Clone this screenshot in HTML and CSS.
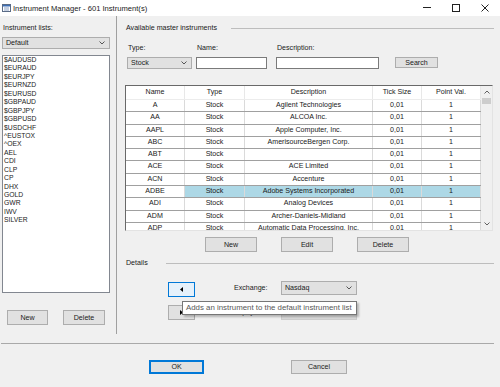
FILE: index.html
```html
<!DOCTYPE html>
<html lang="en">
<head>
    <meta charset="UTF-8">
    <title>Instrument Manager</title>
    <link rel="stylesheet" href="styles.css">
</head>
<body>
    <div class="titlebar">
        <svg class="app-icon" width="9" height="8" viewBox="0 0 9 8">
            <rect x="0.5" y="0.5" width="8" height="7" fill="#fff" stroke="#5a6b86"/>
            <rect x="1" y="1" width="7" height="1.5" fill="#3d6fb6"/>
            <line x1="2" y1="4" x2="7" y2="4" stroke="#8aa0c4"/>
            <line x1="2" y1="6" x2="7" y2="6" stroke="#8aa0c4"/>
        </svg>
        <span class="title">Instrument Manager - 601 Instrument(s)</span>
        <div class="win-controls">
            <span class="win-btn"><svg width="8" height="8"><line x1="0" y1="3.5" x2="8" y2="3.5" stroke="#222"/></svg></span>
            <span class="win-btn"><svg width="8" height="8"><rect x="0.5" y="0.5" width="7" height="7" fill="none" stroke="#222"/></svg></span>
            <span class="win-btn"><svg width="8" height="8"><path d="M0.5 0.5L7.5 7.5M7.5 0.5L0.5 7.5" stroke="#222"/></svg></span>
        </div>
    </div>

    <div class="main">
        <div class="lists-pane">
            <div class="pane-label">Instrument lists:</div>
            <div class="combo list-combo">
                <span>Default</span>
                <svg width="6" height="4"><polyline points="0.5,0.5 3,3 5.5,0.5" fill="none" stroke="#555"/></svg>
            </div>
            <div class="listbox">
                <div>$AUDUSD</div>
                <div>$EURAUD</div>
                <div>$EURJPY</div>
                <div>$EURNZD</div>
                <div>$EURUSD</div>
                <div>$GBPAUD</div>
                <div>$GBPJPY</div>
                <div>$GBPUSD</div>
                <div>$USDCHF</div>
                <div>^EUSTOX</div>
                <div>^OEX</div>
                <div>AEL</div>
                <div>CDI</div>
                <div>CLP</div>
                <div>CP</div>
                <div>DHX</div>
                <div>GOLD</div>
                <div>GWR</div>
                <div>IWV</div>
                <div>SILVER</div>
            </div>
            <div class="pane-buttons">
                <button class="btn btn-list-new">New</button>
                <button class="btn btn-list-delete">Delete</button>
            </div>
        </div>

        <div class="master-pane">
            <div class="group-head top-head">
                <span>Available master instruments</span>
                <i class="rule"></i>
            </div>

            <div class="filter">
                <label>Type:</label>
                <label>Name:</label>
                <label>Description:</label>
                <span></span>
                <div class="combo type-combo">
                    <span>Stock</span>
                    <svg width="6" height="4"><polyline points="0.5,0.5 3,3 5.5,0.5" fill="none" stroke="#555"/></svg>
                </div>
                <input class="field name-field" type="text">
                <input class="field desc-field" type="text">
                <button class="btn search-btn">Search</button>
            </div>

            <div class="grid-box">
                <div class="grid">
                    <div class="row head">
                        <div class="cell">Name</div><div class="cell">Type</div><div class="cell">Description</div><div class="cell">Tick Size</div><div class="cell">Point Val.</div>
                    </div>
                    <div class="row">
                        <div class="cell">A</div><div class="cell">Stock</div><div class="cell">Agilent Technologies</div><div class="cell">0,01</div><div class="cell">1</div>
                    </div>
                    <div class="row">
                        <div class="cell">AA</div><div class="cell">Stock</div><div class="cell">ALCOA Inc.</div><div class="cell">0,01</div><div class="cell">1</div>
                    </div>
                    <div class="row">
                        <div class="cell">AAPL</div><div class="cell">Stock</div><div class="cell">Apple Computer, Inc.</div><div class="cell">0,01</div><div class="cell">1</div>
                    </div>
                    <div class="row">
                        <div class="cell">ABC</div><div class="cell">Stock</div><div class="cell">AmerisourceBergen Corp.</div><div class="cell">0,01</div><div class="cell">1</div>
                    </div>
                    <div class="row">
                        <div class="cell">ABT</div><div class="cell">Stock</div><div class="cell"></div><div class="cell">0,01</div><div class="cell">1</div>
                    </div>
                    <div class="row">
                        <div class="cell">ACE</div><div class="cell">Stock</div><div class="cell">ACE Limited</div><div class="cell">0,01</div><div class="cell">1</div>
                    </div>
                    <div class="row">
                        <div class="cell">ACN</div><div class="cell">Stock</div><div class="cell">Accenture</div><div class="cell">0,01</div><div class="cell">1</div>
                    </div>
                    <div class="row selected">
                        <div class="cell">ADBE</div><div class="cell hl">Stock</div><div class="cell hl">Adobe Systems Incorporated</div><div class="cell hl">0,01</div><div class="cell hl">1</div>
                    </div>
                    <div class="row">
                        <div class="cell">ADI</div><div class="cell">Stock</div><div class="cell">Analog Devices</div><div class="cell">0,01</div><div class="cell">1</div>
                    </div>
                    <div class="row">
                        <div class="cell">ADM</div><div class="cell">Stock</div><div class="cell">Archer-Daniels-Midland</div><div class="cell">0,01</div><div class="cell">1</div>
                    </div>
                    <div class="row">
                        <div class="cell">ADP</div><div class="cell">Stock</div><div class="cell">Automatic Data Processing, Inc.</div><div class="cell">0,01</div><div class="cell">1</div>
                    </div>
                </div>
                <div class="vscroll">
                    <div class="sb-arrow"><svg width="6" height="4"><polyline points="0.5,3.5 3,1 5.5,3.5" fill="none" stroke="#606060"/></svg></div>
                    <div class="sb-thumb"></div>
                    <div class="sb-track"></div>
                    <div class="sb-arrow"><svg width="6" height="4"><polyline points="0.5,0.5 3,3 5.5,0.5" fill="none" stroke="#606060"/></svg></div>
                </div>
            </div>

            <div class="grid-buttons">
                <button class="btn">New</button>
                <button class="btn">Edit</button>
                <button class="btn">Delete</button>
            </div>

            <div class="group-head details-head">
                <span>Details</span>
                <i class="rule"></i>
            </div>

            <div class="details">
                <button class="btn arrow-btn focused">
                    <svg width="3" height="5"><polygon points="3,0 3,5 0,2.5" fill="#000"/></svg>
                </button>
                <span></span>
                <span class="detail-label">Exchange:</span>
                <div class="combo exch-combo">
                    <span>Nasdaq</span>
                    <svg width="6" height="4"><polyline points="0.5,0.5 3,3 5.5,0.5" fill="none" stroke="#555"/></svg>
                </div>

                <button class="btn arrow-btn">
                    <svg width="3" height="5"><polygon points="0,0 0,5 3,2.5" fill="#000"/></svg>
                </button>
                <span></span>
                <span class="detail-label">Expiry:</span>
                <div class="field expiry-field"></div>

                <div class="tooltip">Adds an instrument to the default instrument list</div>
            </div>
        </div>
    </div>

    <div class="footer">
        <button class="btn ok-btn">OK</button>
        <button class="btn cancel-btn">Cancel</button>
    </div>
</body>
</html>
```

FILE: styles.css
```css
body {
    margin: 0;
    width: 500px;
    height: 387px;
    overflow: hidden;
    background: #f0f0f0;
    font-family: "Liberation Sans", Arial, sans-serif;
    font-size: 7.1px;
    color: #1a1a1a;
}

/* window title */
.titlebar {
    height: 16px;
    background: #fff;
    display: flex;
    align-items: center;
}

.app-icon {
    margin-left: 2px;
}

.title {
    margin-left: 2px;
    font-size: 7.6px;
    color: #222;
}

.win-controls {
    margin-left: auto;
    margin-right: 1px;
    display: flex;
}

.win-btn {
    width: 29px;
    height: 16px;
    display: flex;
    align-items: center;
    justify-content: center;
}

.main {
    display: flex;
    height: 318px;
}

/* left: instrument lists */
.lists-pane {
    width: 117px;
    box-sizing: border-box;
    padding-left: 2px;
    border-right: 1px solid #a0a0a0;
}

.pane-label {
    margin-top: 8px;
    line-height: 9px;
    padding-left: 1px;
}

.combo {
    display: flex;
    align-items: center;
    justify-content: space-between;
    box-sizing: border-box;
    height: 12px;
    padding: 0 4px 0 3px;
    background: #e1e1e1;
    border: 1px solid #adadad;
}

.list-combo {
    margin-top: 4px;
    width: 108px;
}

.listbox {
    margin-top: 6px;
    width: 108px;
    height: 238px;
    box-sizing: border-box;
    border: 1px solid #828790;
    background: #fff;
    padding-left: 1px;
    font-size: 6.8px;
    line-height: 8.43px;
}

.pane-buttons {
    margin-top: 17px;
    display: flex;
}

.btn {
    font-family: inherit;
    font-size: 7.1px;
    color: #1a1a1a;
    background: #e1e1e1;
    border: 1px solid #adadad;
    padding: 0;
    box-sizing: border-box;
    height: 15px;
}

.btn-list-new {
    margin-left: 5px;
    width: 41px;
}

.btn-list-delete {
    margin-left: 15px;
    width: 42px;
}

/* right: master instruments */
.master-pane {
    flex: 1;
    padding: 0 6px 0 8px;
}

.group-head {
    display: flex;
    align-items: center;
    line-height: 9px;
    padding-left: 1px;
}

.group-head .rule {
    flex: 1;
    border-top: 1px solid #bdbdbd;
}

.top-head {
    margin-top: 8px;
}

.top-head .rule {
    margin-left: 14px;
}

.filter {
    display: grid;
    grid-template-columns: 69px 80px 119px 43px;
    grid-template-rows: 9px 12px;
    row-gap: 4px;
    margin: 11px 0 0 2px;
    line-height: 9px;
}

.filter label {
    padding-left: 1px;
}

.type-combo {
    width: 65px;
}

.field {
    box-sizing: border-box;
    height: 12px;
    padding: 0;
    margin: 0;
    border: 1px solid #7a7a7a;
    background: #fff;
}

.name-field {
    width: 71px;
}

.desc-field {
    width: 103px;
}

.search-btn {
    width: 43px;
    height: 11px;
}

.grid-box {
    margin-top: 16px;
    width: 368px;
    height: 146px;
    box-sizing: border-box;
    border: 1px solid;
    border-color: #696969 #e3e3e3 #e3e3e3 #696969;
    display: flex;
}

.grid {
    width: 355px;
    height: 144px;
    background: #fff;
    overflow: hidden;
}

.row {
    display: grid;
    grid-template-columns: 59px 60px 128px 49px 59px;
    height: 12.3px;
    box-sizing: border-box;
    border-bottom: 1px solid #a0a0a0;
}

.row.head {
    height: 14px;
    border-bottom: 1px solid #ececec;
}

.cell {
    text-align: center;
    white-space: nowrap;
    overflow: hidden;
    line-height: 11.3px;
    border-right: 1px solid #dadada;
}

.row.head .cell {
    line-height: 13px;
    border-right-color: #e8e8e8;
}

.row.selected .hl {
    background: #add8e6;
}

.vscroll {
    width: 11px;
    background: #f0f0f0;
    display: flex;
    flex-direction: column;
    align-items: center;
}

.sb-arrow {
    height: 12px;
    display: flex;
    align-items: center;
    justify-content: center;
}

.sb-thumb {
    width: 9px;
    height: 6px;
    background: #cdcdcd;
}

.sb-track {
    flex: 1;
}

.grid-buttons {
    margin-top: 6px;
    padding-left: 80px;
    display: flex;
    gap: 24px;
}

.grid-buttons .btn {
    width: 52px;
}

.details-head {
    margin-top: 7px;
}

.details-head .rule {
    margin-left: 18px;
}

/* details editor */
.details {
    position: relative;
    margin-top: 13px;
    padding-left: 43px;
    display: grid;
    grid-template-columns: 27px 39px 47px 76px;
    grid-template-rows: 15px 15px;
    row-gap: 9px;
}

.arrow-btn {
    width: 27px;
    display: flex;
    align-items: center;
    justify-content: center;
}

.arrow-btn.focused {
    margin-top: 1px;
    border-color: #0078d7;
    background: #e5f1fb;
}

.detail-label {
    line-height: 15px;
}

.exch-combo {
    width: 76px;
    height: 14px;
}

.expiry-field {
    width: 76px;
    height: 15px;
    background: #d9d9d9;
    border-color: #cccccc;
}

.tooltip {
    position: absolute;
    left: 57px;
    top: 20px;
    width: 175px;
    height: 14px;
    box-sizing: border-box;
    padding-left: 3px;
    background: #fff;
    border: 1px solid #767676;
    color: #575757;
    font-size: 7.85px;
    line-height: 12px;
    white-space: nowrap;
    box-shadow: 2px 2px 2px rgba(0, 0, 0, 0.25);
}

/* dialog footer */
.footer {
    margin: 9px 6px 0 1px;
    border-top: 1px solid #a9a9a9;
    padding: 16px 0 0 148px;
    display: flex;
}

.ok-btn {
    width: 55px;
    height: 14px;
    border-color: #0078d7;
    box-shadow: inset 0 0 0 1px #0078d7;
}

.cancel-btn {
    margin-left: 87px;
    width: 56px;
    height: 14px;
}
```
